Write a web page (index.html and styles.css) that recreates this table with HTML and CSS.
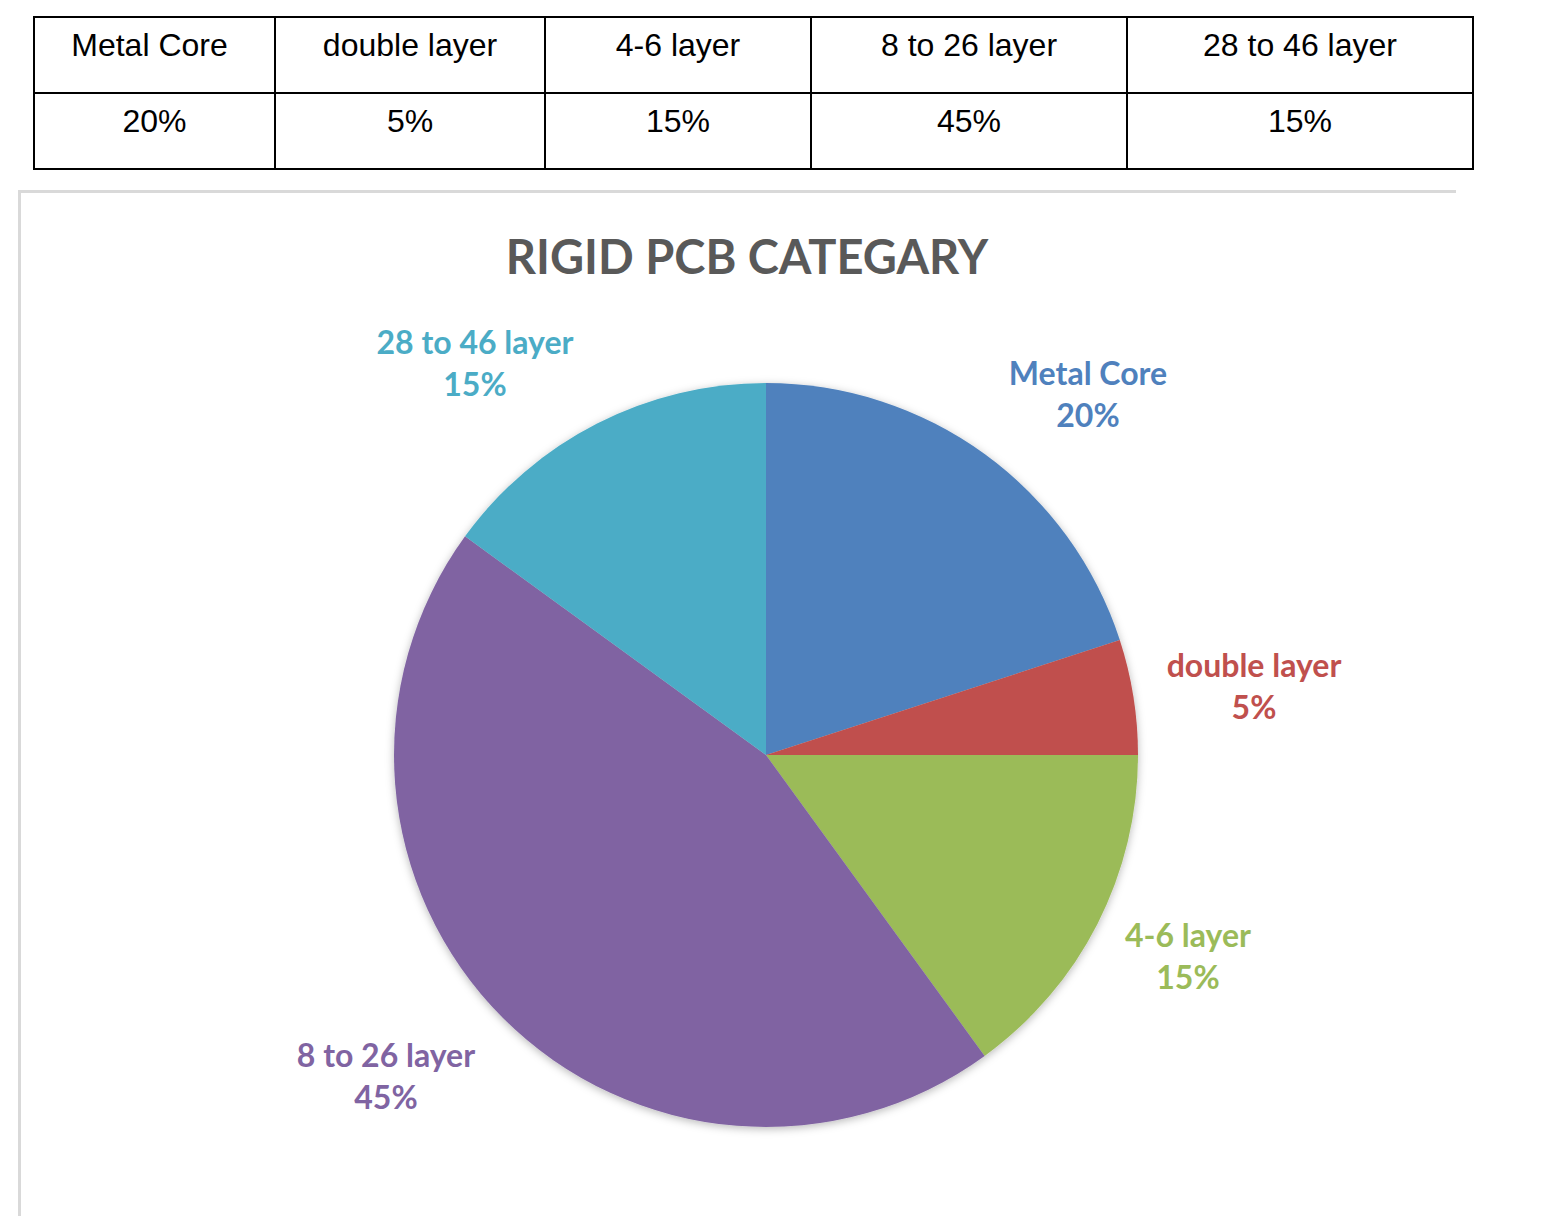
FILE: index.html
```html
<!DOCTYPE html>
<html>
<head>
<meta charset="utf-8">
<title>Rigid PCB Categary</title>
<link rel="stylesheet" href="styles.css">
</head>
<body>
<table class="data">
  <colgroup>
    <col class="c1"><col class="c2"><col class="c3"><col class="c4"><col class="c5">
  </colgroup>
  <tr>
    <td class="first">Metal Core</td>
    <td>double layer</td>
    <td>4-6 layer</td>
    <td>8 to 26 layer</td>
    <td>28 to 46 layer</td>
  </tr>
  <tr>
    <td>20%</td>
    <td>5%</td>
    <td>15%</td>
    <td>45%</td>
    <td>15%</td>
  </tr>
</table>

<div class="chart">
  <h2 class="chart-title">RIGID PCB CATEGARY</h2>
  <svg class="pie" width="1435" height="932" viewBox="21 284 1435 932" xmlns="http://www.w3.org/2000/svg">
    <defs>
      <filter id="sh" x="-10%" y="-10%" width="120%" height="120%">
        <feDropShadow dx="0" dy="2" stdDeviation="4" flood-color="#000" flood-opacity="0.28"/>
      </filter>
    </defs>
    <g filter="url(#sh)">
      <path class="s-blue" d="M766 755 L766 383 A372 372 0 0 1 1119.8 640.04 Z"/>
      <path class="s-red" d="M766 755 L1119.8 640.04 A372 372 0 0 1 1138 755 Z"/>
      <path class="s-green" d="M766 755 L1138 755 A372 372 0 0 1 984.66 1055.95 Z"/>
      <path class="s-purple" d="M766 755 L984.66 1055.95 A372 372 0 0 1 465.05 536.34 Z"/>
      <path class="s-cyan" d="M766 755 L465.05 536.34 A372 372 0 0 1 766 383 Z"/>
    </g>
    <g class="labels">
      <text class="l-cyan" x="475" y="354">28 to 46 layer</text>
      <text class="l-cyan" x="475" y="396">15%</text>
      <text class="l-blue" x="1088" y="385">Metal Core</text>
      <text class="l-blue" x="1088" y="427">20%</text>
      <text class="l-red" x="1254" y="677">double layer</text>
      <text class="l-red" x="1254" y="719">5%</text>
      <text class="l-green" x="1188" y="947">4-6 layer</text>
      <text class="l-green" x="1188" y="989">15%</text>
      <text class="l-purple" x="386" y="1067">8 to 26 layer</text>
      <text class="l-purple" x="386" y="1109">45%</text>
    </g>
  </svg>
</div>
</body>
</html>
```

FILE: styles.css
```css
html, body {
  margin: 0;
  padding: 0;
  background: #ffffff;
}

body {
  font-family: "Liberation Sans", Arial, sans-serif;
  overflow: hidden;
}

.data {
  border-collapse: collapse;
  table-layout: fixed;
  width: 1441px;
  margin: 16px 0 0 33px;
  font-family: "Liberation Sans", Arial, sans-serif;
  font-size: 32px;
  color: #000000;
}

.c1 { width: 241px; }
.c2 { width: 270px; }
.c3 { width: 266px; }
.c4 { width: 316px; }
.c5 { width: 346px; }

.data td {
  border: 2px solid #000000;
  height: 76px;
  box-sizing: border-box;
  padding: 9px 4px 0;
  vertical-align: top;
  text-align: center;
  line-height: 36px;
}

.data td.first {
  padding-right: 14px;
}

.chart {
  margin: 20px 0 0 18px;
  width: 1435px;
  border-top: 3px solid #d9d9d9;
  border-left: 3px solid #d9d9d9;
}

.chart-title {
  margin: 0;
  padding: 35px 0 0 17px;
  height: 56px;
  font-family: Lato, "Open Sans", sans-serif;
  font-weight: 700;
  font-size: 47px;
  line-height: 56px;
  color: #595959;
  text-align: center;
}

.pie {
  display: block;
}

.s-blue { fill: #4f81bd; }
.s-red { fill: #c0504d; }
.s-green { fill: #9bbb59; }
.s-purple { fill: #8064a2; }
.s-cyan { fill: #4bacc6; }

.labels text {
  font-family: Lato, "Open Sans", sans-serif;
  font-weight: 700;
  font-size: 32px;
  text-anchor: middle;
}

.l-blue { fill: #4f81bd; }
.l-red { fill: #c0504d; }
.l-green { fill: #9bbb59; }
.l-purple { fill: #8064a2; }
.l-cyan { fill: #4bacc6; }
```
